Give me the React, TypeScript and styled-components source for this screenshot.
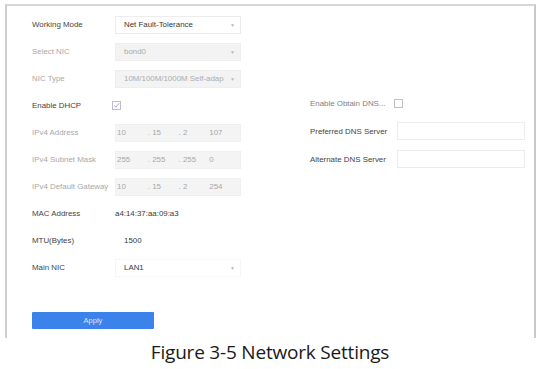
import React, { FC } from "react";
import styled, { createGlobalStyle } from "styled-components";

const GlobalStyle = createGlobalStyle`
  html, body {
    margin: 0;
    padding: 0;
    background: #ffffff;
  }
  body {
    font-family: "Liberation Sans", Arial, sans-serif;
  }
`;

const Page = styled.div`
  width: 550px;
  height: 369px;
  overflow: hidden;
  display: flex;
  flex-direction: column;
`;

const Frame = styled.div`
  margin: 4px 0 0 5px;
  width: 531px;
  height: 334px;
  border-top: 2px solid #d6d6d6;
  border-left: 2px solid #cfcfcf;
  border-right: 2px solid #c8c8c8;
  padding: 5px 0 0 25px;
  box-sizing: border-box;
  display: flex;
  flex-direction: column;
`;

const Columns = styled.div`
  display: flex;
`;

const Column = styled.div<{ offset?: number; gapLeft?: number; labelWidth: number; fieldWidth: number }>`
  display: flex;
  flex-direction: column;
  margin-top: ${(p) => p.offset || 0}px;
  margin-left: ${(p) => p.gapLeft || 0}px;
  width: ${(p) => p.labelWidth + p.fieldWidth}px;
  --label-w: ${(p) => p.labelWidth}px;
  --field-w: ${(p) => p.fieldWidth}px;
`;

const Row = styled.div<{ h?: number }>`
  display: flex;
  align-items: center;
  height: ${(p) => p.h || 27}px;
`;

const Label = styled.div<{ tone?: "dark" | "mid" | "light" }>`
  width: var(--label-w);
  flex-shrink: 0;
  font-size: 7.9px;
  white-space: nowrap;
  color: ${(p) =>
    p.tone === "light" ? "#a8a8a8" : p.tone === "mid" ? "#808080" : "#444444"};
`;

const Field = styled.div<{ variant?: "plain" | "disabled" | "faint" | "bare" }>`
  width: var(--field-w);
  height: 18px;
  box-sizing: border-box;
  display: flex;
  align-items: center;
  padding: 0 5px 0 8px;
  font-size: 7.9px;
  background: ${(p) => (p.variant === "disabled" ? "#f3f3f3" : "#ffffff")};
  border: 1px solid
    ${(p) =>
      p.variant === "disabled"
        ? "#eeeeee"
        : p.variant === "faint"
        ? "#f6f6f6"
        : p.variant === "bare"
        ? "transparent"
        : "#ececec"};
  color: ${(p) => (p.variant === "disabled" ? "#acacac" : "#383838")};
`;

const FieldText = styled.span`
  flex: 1;
  min-width: 0;
  white-space: nowrap;
  overflow: hidden;
  margin-right: 4px;
`;

const Arrow = styled.span`
  font-size: 5px;
  color: #b8b8b8;
  flex-shrink: 0;
`;

const IpBox = styled.div`
  width: var(--field-w);
  height: 18px;
  box-sizing: border-box;
  display: flex;
  align-items: center;
  background: #f4f4f4;
  border: 1px solid #f0f0f0;
  font-size: 7.9px;
  color: #a8a8a8;
`;

const IpSegment = styled.span`
  width: 31.5px;
  white-space: nowrap;
  &:first-child {
    padding-left: 1px;
  }
`;

const Value = styled.div`
  font-size: 7.9px;
  color: #383838;
`;

const Check = styled.span<{ checked?: boolean }>`
  width: 7px;
  height: 7px;
  border: 1px solid ${(p) => (p.checked ? "#bcbcd8" : "#c0c0c0")};
  background: #ffffff;
  display: flex;
  align-items: center;
  justify-content: center;
  margin-left: -3px;
`;

const ApplyButton = styled.button`
  margin-top: 31px;
  width: 122px;
  height: 17px;
  border: none;
  border-radius: 1px;
  background: #3b82ea;
  color: #dbe7fb;
  font-family: "Liberation Sans", Arial, sans-serif;
  font-size: 7.5px;
  padding: 0;
  cursor: pointer;
`;

const Caption = styled.div`
  text-align: center;
  font-family: "Open Sans", "Liberation Sans", sans-serif;
  font-size: 19px;
  line-height: 24px;
  letter-spacing: -0.2px;
  color: #1a1a1a;
  margin-top: 2px;
  padding-right: 10px;
`;

const Select: FC<{ value: string; variant?: "plain" | "disabled" | "faint" }> = ({
  value,
  variant,
}) => (
  <Field variant={variant}>
    <FieldText>{value}</FieldText>
    <Arrow>▼</Arrow>
  </Field>
);

const Ip: FC<{ parts: string[] }> = ({ parts }) => (
  <IpBox>
    {parts.map((p, i) => (
      <IpSegment key={i}>{p}</IpSegment>
    ))}
  </IpBox>
);

const Tick = () => (
  <svg width="7" height="7" viewBox="0 0 7 7">
    <path d="M1 3.4 L2.9 5.2 L6.2 1.2" fill="none" stroke="#9d9dc8" strokeWidth="0.9" />
  </svg>
);

const App: FC = () => (
  <Page>
    <GlobalStyle />
    <Frame>
      <Columns>
        <Column labelWidth={83} fieldWidth={126}>
          <Row>
            <Label>Working Mode</Label>
            <Select value="Net Fault-Tolerance" />
          </Row>
          <Row>
            <Label tone="light">Select NIC</Label>
            <Select value="bond0" variant="disabled" />
          </Row>
          <Row>
            <Label tone="light">NIC Type</Label>
            <Select value="10M/100M/1000M Self-adap" variant="disabled" />
          </Row>
          <Row>
            <Label>Enable DHCP</Label>
            <Check checked>
              <Tick />
            </Check>
          </Row>
          <Row>
            <Label tone="light">IPv4 Address</Label>
            <Ip parts={["10", ". 15", ". 2", "107"]} />
          </Row>
          <Row>
            <Label tone="light">IPv4 Subnet Mask</Label>
            <Ip parts={["255", ". 255", ". 255", "0"]} />
          </Row>
          <Row>
            <Label tone="light">IPv4 Default Gateway</Label>
            <Ip parts={["10", ". 15", ". 2", "254"]} />
          </Row>
          <Row>
            <Label>MAC Address</Label>
            <Value>a4:14:37:aa:09:a3</Value>
          </Row>
          <Row>
            <Label>MTU(Bytes)</Label>
            <Field variant="bare">
              <FieldText>1500</FieldText>
            </Field>
          </Row>
          <Row>
            <Label>Main NIC</Label>
            <Select value="LAN1" variant="faint" />
          </Row>
          <ApplyButton>Apply</ApplyButton>
        </Column>
        <Column offset={78} gapLeft={69} labelWidth={87} fieldWidth={128}>
          <Row h={28}>
            <Label tone="mid">Enable Obtain DNS...</Label>
            <Check />
          </Row>
          <Row h={28}>
            <Label>Preferred DNS Server</Label>
            <Field />
          </Row>
          <Row h={28}>
            <Label>Alternate DNS Server</Label>
            <Field />
          </Row>
        </Column>
      </Columns>
    </Frame>
    <Caption>Figure 3-5 Network Settings</Caption>
  </Page>
);

export default App;
